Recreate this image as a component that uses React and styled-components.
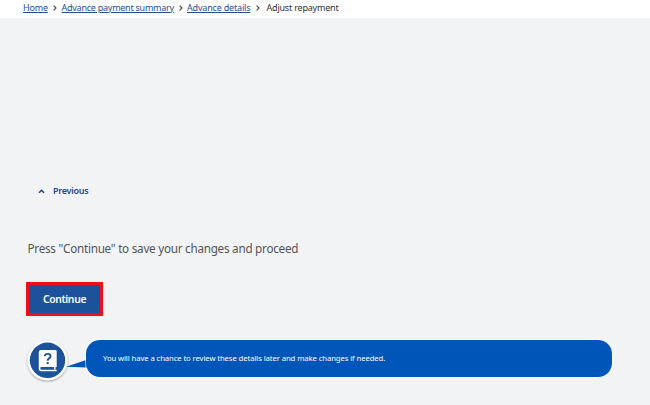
import React from "react";
import styled, { createGlobalStyle } from "styled-components";

const GlobalStyle = createGlobalStyle`
  * { box-sizing: border-box; }
  body {
    margin: 0;
    background: #f1f3f5;
    font-family: "Noto Sans", "Open Sans", sans-serif;
    overflow: hidden;
  }
`;

const Page = styled.div`
  width: 650px;
  height: 405px;
  display: flex;
  flex-direction: column;
`;

const Breadcrumbs = styled.nav`
  display: flex;
  align-items: center;
  height: 18px;
  flex: none;
  padding: 0 0 3px 23px;
  background: #fff;
  font-size: 9px;
  line-height: 14px;
  white-space: nowrap;
`;

const Crumb = styled.a`
  flex: none;
  width: ${(p) => p.$width}px;
  color: #23508c;
  text-decoration: underline;
  text-underline-offset: 1px;
  letter-spacing: ${(p) => p.$spacing || 0}px;
`;

const CurrentCrumb = styled.span`
  color: #333;
  letter-spacing: -0.2px;
`;

const Separator = styled.svg`
  flex: none;
  width: 4px;
  height: 6px;
  margin: 0 ${(p) => p.$after || 4}px 0 5px;
`;

const Main = styled.main`
  display: flex;
  flex-direction: column;
  align-items: flex-start;
  padding: 165px 0 0 26px;
`;

const PreviousLink = styled.a`
  display: flex;
  align-items: center;
  gap: 8px;
  height: 16px;
  margin-left: 12px;
  color: #1f4a8a;
  font-size: 9px;
  font-weight: 600;
  line-height: 16px;
  letter-spacing: -0.27px;
`;

const Instruction = styled.p`
  margin: 39px 0 0 1.5px;
  height: 20px;
  color: #555;
  font-size: 11.7px;
  line-height: 20px;
  white-space: nowrap;
  letter-spacing: -0.25px;
`;

const ContinueButton = styled.button`
  width: 77px;
  height: 34px;
  margin-top: 24px;
  padding: 0;
  border: 3px solid #f20d1c;
  background: #1c5299;
  color: #fff;
  font: 600 10.4px/20px "Noto Sans", sans-serif;
  letter-spacing: -0.37px;
`;

const Hint = styled.div`
  display: flex;
  align-items: flex-start;
  margin-top: 22px;
`;

const HintIcon = styled.svg`
  flex: none;
  width: 48px;
  height: 50px;
  margin: 0 -6px 0 -2px;
`;

const Tail = styled.svg`
  flex: none;
  width: 21px;
  height: 12px;
  margin: 20px -1px 0 0;
`;

const Bubble = styled.div`
  display: flex;
  align-items: center;
  width: 526px;
  height: 37px;
  margin-top: 2px;
  padding: 0 0 1px 17px;
  border-radius: 14px;
  background: #0055b8;
  box-shadow: 0 0 0 1px #fff9;
  color: #fff;
  font-size: 7.7px;
  line-height: 12px;
  letter-spacing: -0.09px;
  white-space: nowrap;
`;

const Chevron = ({ after }) => (
  <Separator $after={after} viewBox="0 0 4 6">
    <path d="M.6 .6 3 3 .6 5.4" fill="none" stroke="#444" strokeWidth="1.1" />
  </Separator>
);

export default function App() {
  return (
    <>
      <GlobalStyle />
      <Page>
        <Breadcrumbs>
          <Crumb $width={25} $spacing={-0.2}>Home</Crumb>
          <Chevron after={4.5} />
          <Crumb $width={112.5} $spacing={-0.25}>Advance payment summary</Crumb>
          <Chevron />
          <Crumb $width={63.5} $spacing={-0.18}>Advance details</Crumb>
          <Chevron after={7} />
          <CurrentCrumb>Adjust repayment</CurrentCrumb>
        </Breadcrumbs>
        <Main>
          <PreviousLink>
            <svg width="7" height="5" viewBox="0 0 7 5">
              <path d="M1 3.8 3.5 1.4 6 3.8" fill="none" stroke="#1f4a8a" strokeWidth="1.5" />
            </svg>
            Previous
          </PreviousLink>
          <Instruction>Press "Continue" to save your changes and proceed</Instruction>
          <ContinueButton>Continue</ContinueButton>
          <Hint>
            <HintIcon viewBox="24 338 48 50">
              <defs>
                <filter id="shadow" x="-20%" y="-20%" width="140%" height="140%">
                  <feDropShadow dx="0" dy="1" stdDeviation="1" floodColor="#000" floodOpacity="0.4" />
                </filter>
              </defs>
              <circle cx="47.5" cy="360.3" r="20" fill="#fff" filter="url(#shadow)" />
              <circle cx="47.5" cy="360.3" r="17.7" fill="#1c5299" />
              <path
                d="M41 350H55.4Q56.7 350 56.7 351.3V367H41.3Q40.3 367 40.3 368.3T41.3 369.7H56.7V371.3H41Q38.8 371.3 38.8 369V352.2Q38.8 350 41 350Z"
                fill="#fff"
              />
              <path d="M54 367H55.5V369.7H54Z" fill="#fff" />
              <path
                d="M44.8 356.1Q45 353.9 47.7 353.9Q50.5 353.9 50.5 356.2Q50.5 357.5 49 358.3Q47.7 359 47.7 360.8"
                fill="none"
                stroke="#1c5299"
                strokeWidth="1.9"
              />
              <circle cx="47.7" cy="363.1" r="1.2" fill="#1c5299" />
            </HintIcon>
            <Tail viewBox="0 0 21 12">
              <path d="M0 8.8 21 1.7V9.5Z" fill="#0055b8" />
            </Tail>
            <Bubble>You will have a chance to review these details later and make changes if needed.</Bubble>
          </Hint>
        </Main>
      </Page>
    </>
  );
}
